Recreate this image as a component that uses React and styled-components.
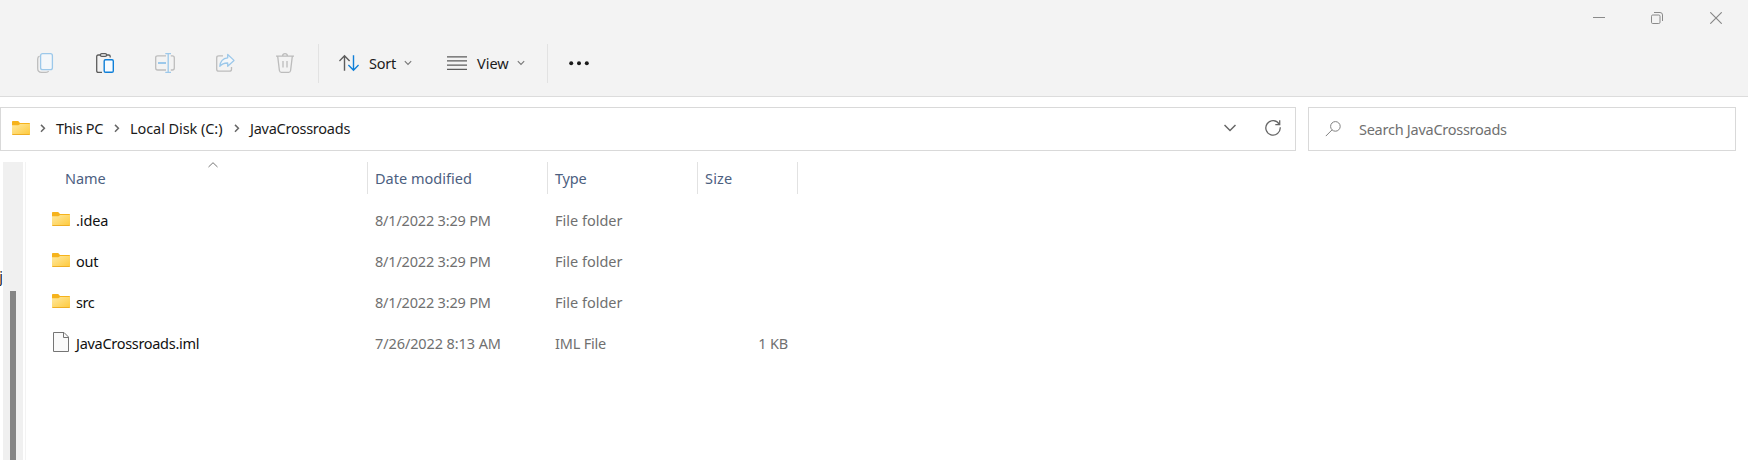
import React from 'react';
import styled, { createGlobalStyle } from 'styled-components';

const GlobalStyle = createGlobalStyle`
  * { box-sizing: border-box; }
  body {
    margin: 0;
    background: #fff;
    font: 14.5px/20px 'Noto Sans', 'Open Sans', sans-serif;
  }
  svg { display: block; flex: none; }
`;

const Window = styled.div`
  display: flex;
  flex-direction: column;
  height: 460px;
  overflow: hidden;
  background: #fff;
`;

const Header = styled.header`
  flex: none;
  height: 97px;
  background: #f3f3f3;
  border-bottom: 1px solid #dcdcdc;
`;

const TitleBar = styled.div`
  display: flex;
  justify-content: flex-end;
  height: 30px;
  padding: 6px 3px 0 0;
`;

const WindowButton = styled.div`
  display: flex;
  align-items: center;
  justify-content: center;
  width: ${(p) => p.$width || 58}px;
  height: 24px;
`;

const Toolbar = styled.div`
  display: flex;
  align-items: center;
  height: 66px;
  padding-left: 15px;
`;

const ToolButton = styled.div`
  display: flex;
  align-items: center;
  justify-content: center;
  width: 60px;
  height: 40px;
`;

const ToolMenu = styled.div`
  display: flex;
  align-items: center;
  width: ${(p) => p.$width}px;
  height: 40px;
  padding-left: ${(p) => p.$inset}px;
  color: #1b1b1b;
`;

const MenuLabel = styled.span`
  flex: none;
  width: ${(p) => p.$width}px;
  margin-left: 10px;
  letter-spacing: ${(p) => p.$track || 0}px;
  white-space: nowrap;
`;

const ToolDivider = styled.div`
  width: 1px;
  height: 39px;
  margin-left: ${(p) => p.$gap || 0}px;
  background: #e2e2e2;
`;

const NavRow = styled.div`
  display: flex;
  flex: none;
  gap: 12px;
  padding: 10px 12px 11px 0;
`;

const Field = styled.div`
  display: flex;
  align-items: center;
  height: 44px;
  border: 1px solid #d9d9d9;
  background: #fff;
`;

const AddressBar = styled(Field)`
  width: 1296px;
  padding: 0 14px 2px 11px;
`;

const SearchBox = styled(Field)`
  flex: 1;
  padding-left: 16px;
  color: #707070;
`;

const SearchHint = styled.span`
  margin-left: 18px;
  letter-spacing: -0.26px;
`;

const Crumb = styled.span`
  flex: none;
  width: ${(p) => p.$width}px;
  margin-left: ${(p) => p.$gap}px;
  letter-spacing: ${(p) => p.$track || 0}px;
  white-space: nowrap;
  color: #1b1b1b;
`;

const Spacer = styled.div`
  flex: 1;
`;

const AddressActions = styled.div`
  display: flex;
  align-items: center;
  gap: 29px;
`;

const CrumbArrowSlot = styled.div`
  margin-left: ${(p) => p.$gap || 0}px;
`;

const Content = styled.main`
  display: flex;
  flex: 1;
  min-height: 0;
`;

const NavPane = styled.div`
  display: flex;
  justify-content: flex-end;
  width: 3px;
  padding-top: 104px;
  overflow: hidden;
  color: #222;
`;

const ScrollTrack = styled.div`
  width: 20px;
  padding: 129px 7px 0;
  background: #f0f0f0;
`;

const ScrollThumb = styled.div`
  height: 100%;
  background: #858585;
`;

const PaneBorder = styled.div`
  width: 1px;
  margin-left: 2px;
  background: #f3f3f3;
`;

const FileList = styled.div`
  width: 773px;
`;

const columns = '342px 180px 150px 100px';

const ListHeader = styled.div`
  display: grid;
  grid-template-columns: ${columns};
  height: 32px;
  margin-bottom: 6px;
  color: #4c607f;
`;

const HeaderCell = styled.div`
  display: flex;
  align-items: center;
  padding: 0 0 1px ${(p) => p.$inset || 7}px;
  border-right: 1px solid #e2e2e2;
  letter-spacing: ${(p) => p.$track || 0}px;
`;

const SortCaret = styled.div`
  align-self: flex-start;
  margin-left: 102px;
`;

const Row = styled.div`
  display: grid;
  grid-template-columns: ${columns};
  align-items: center;
  height: 41px;
  padding-bottom: 2px;
  color: #707070;
`;

const NameCell = styled.div`
  display: flex;
  align-items: center;
  padding-left: 26px;
  color: #111;
`;

const IconSlot = styled.div`
  width: 18px;
  margin: -1px 6px 0 0;
`;

const FileName = styled.span`
  letter-spacing: ${(p) => p.$track || 0}px;
`;

const Cell = styled.div`
  padding-left: 7px;
  letter-spacing: ${(p) => p.$track || 0}px;
  white-space: nowrap;
`;

const SizeCell = styled(Cell)`
  padding-right: 10px;
  text-align: right;
`;

const Icon = ({ w = 20, h = 20, children, ...rest }) => (
  <svg width={w} height={h} viewBox={`0 0 ${w} ${h}`} fill="none" {...rest}>
    {children}
  </svg>
);

const CopyIcon = () => (
  <Icon strokeWidth="1.3">
    <path d="M4.6 3.2Q2.7 3.8 2.7 6V15.5Q2.7 19.3 6.5 19.3H11Q13 19.3 13.6 18" stroke="#bdbdbd" />
    <rect x="5.6" y=".7" width="11.8" height="16" rx="2" fill="#f4f7fa" stroke="#9cc8ea" />
  </Icon>
);

const PasteIcon = () => (
  <Icon strokeWidth="1.3">
    <path d="M7 19.3H3.2Q1.7 19.3 1.7 17.8V3.7Q1.7 2 3.2 2H5.5M11.5 2H13.8Q15.2 2 15.2 3.5V4.5" stroke="#5c5c5c" />
    <rect x="5.4" y=".7" width="6.2" height="2.6" rx="1.3" stroke="#5c5c5c" />
    <rect x="9.2" y="6.7" width="9.1" height="12.6" rx="1.3" fill="#f7fbff" stroke="#0f7fd8" strokeWidth="1.4" />
  </Icon>
);

const RenameIcon = () => (
  <Icon strokeWidth="1.3">
    <path d="M11 2.8H2.7Q.7 2.8 .7 4.8V15Q.7 17 2.7 17H11M15.8 2.8H17.3Q19.3 2.8 19.3 4.8V15Q19.3 17 17.3 17H15.8" stroke="#bdbdbd" />
    <path d="M3 10H11" stroke="#9cc8ea" strokeWidth="2" />
    <path d="M10.3 .7H16M10.3 19.3H16M13.2 .7V19.3" stroke="#9cc8ea" />
  </Icon>
);

const ShareIcon = () => (
  <Icon strokeWidth="1.3">
    <path d="M8 2.8H3.8Q1.7 2.8 1.7 4.9V16.2Q1.7 18.2 3.8 18.2H14.5Q16.5 18.2 16.5 16.2V14" stroke="#bdbdbd" />
    <path d="M12.7 1.5L19 7.4L12.7 13.2V10Q7.8 9.8 4.8 13.3Q5.5 5.5 12.7 4.8Z" fill="#f4f7fa" stroke="#9cc8ea" strokeLinejoin="round" />
  </Icon>
);

const TrashIcon = () => (
  <Icon strokeWidth="1.3" stroke="#bcbcbc">
    <path d="M1 3.2H19M7.5 3Q7.8 .7 10 .7T12.5 3M2.7 3.4L4.4 17.5Q4.7 19.3 6.3 19.3H13.7Q15.3 19.3 15.6 17.5L17.3 3.4M8 8V14.5M12 8V14.5" />
  </Icon>
);

const SortIcon = () => (
  <Icon strokeWidth="1.4">
    <path d="M5.5 17.8V2.8M.4 8L5.5 2.8L10.6 8" stroke="#5c5c5c" />
    <path d="M14.5 2.2V17.2M9.4 12L14.5 17.2L19.6 12" stroke="#0f7fd8" />
  </Icon>
);

const ViewIcon = () => (
  <Icon stroke="#5c5c5c" strokeWidth="1.2">
    <path d="M0 3.8H20M0 7.9H20M0 12.1H20M0 16.3H20" />
  </Icon>
);

const MenuChevron = () => (
  <Icon w={8} h={6} stroke="#777" strokeWidth="1.1">
    <path d="M.8 1.2L4 4.4L7.2 1.2" />
  </Icon>
);

const MoreIcon = () => (
  <Icon w={20} h={6} fill="#1b1b1b">
    <circle cx="2.2" cy="3.3" r="2" />
    <circle cx="10" cy="3.3" r="2" />
    <circle cx="17.8" cy="3.3" r="2" />
  </Icon>
);

const CrumbArrow = () => (
  <Icon w={6} h={10} stroke="#666" strokeWidth="1.5">
    <path d="M1 1.9L4.4 5.3L1 8.7" />
  </Icon>
);

const FolderIcon = () => (
  <Icon w={18} h={14}>
    <defs>
      <linearGradient id="folder" x1="0" y1="0" x2="1" y2="1">
        <stop offset="0" stopColor="#ffe9a0" />
        <stop offset="1" stopColor="#fec93b" />
      </linearGradient>
    </defs>
    <path d="M0 .8Q0 0 .8 0H6.2L8 2H17.3Q18 2 18 2.8V6H0Z" fill="#f6b31c" />
    <path d="M0 4.2H6.3L8.2 3H18V13.2Q18 14 17.2 14H.8Q0 14 0 13.2Z" fill="url(#folder)" />
    <path d="M.4 13.5H17.6" stroke="#eeae25" />
  </Icon>
);

const FileIcon = () => (
  <Icon w={18} h={20}>
    <path d="M1.5 .5H12L16.5 5V19.5H1.5Z" fill="#fafafa" stroke="#757575" />
    <path d="M11.5 .5V5.5H16.5" stroke="#757575" />
  </Icon>
);

const rows = [
  { name: '.idea', track: -0.1, date: '8/1/2022 3:29 PM', type: 'File folder', folder: true },
  { name: 'out', track: -0.3, date: '8/1/2022 3:29 PM', type: 'File folder', folder: true },
  { name: 'src', track: -0.4, date: '8/1/2022 3:29 PM', type: 'File folder', folder: true },
  { name: 'JavaCrossroads.iml', track: -0.3, date: '7/26/2022 8:13 AM', type: 'IML File', size: '1 KB' },
];

export default function App() {
  return (
    <Window>
      <GlobalStyle />
      <Header>
        <TitleBar>
          <WindowButton>
            <Icon w={12} h={12} stroke="#8a8a8a"><path d="M0 5.5H12" /></Icon>
          </WindowButton>
          <WindowButton>
            <Icon w={12} h={12} stroke="#8a8a8a">
              <rect x=".5" y="3" width="8.5" height="8.5" rx="1.2" />
              <path d="M3 .5H9Q11.5 .5 11.5 3V9" />
            </Icon>
          </WindowButton>
          <WindowButton $width={59}>
            <Icon w={12} h={12} stroke="#858585" strokeWidth="1.1"><path d="M.3 .3L11.7 11.7M11.7 .3L.3 11.7" /></Icon>
          </WindowButton>
        </TitleBar>
        <Toolbar>
          <ToolButton><CopyIcon /></ToolButton>
          <ToolButton><PasteIcon /></ToolButton>
          <ToolButton><RenameIcon /></ToolButton>
          <ToolButton><ShareIcon /></ToolButton>
          <ToolButton><TrashIcon /></ToolButton>
          <ToolDivider $gap={3} />
          <ToolMenu $width={108} $inset={20}>
            <SortIcon />
            <MenuLabel $width={35} $track={-0.2}>Sort</MenuLabel>
            <MenuChevron />
          </ToolMenu>
          <ToolMenu $width={120} $inset={20}>
            <ViewIcon />
            <MenuLabel $width={40}>View</MenuLabel>
            <MenuChevron />
          </ToolMenu>
          <ToolDivider />
          <ToolMenu $width={60} $inset={21}><MoreIcon /></ToolMenu>
        </Toolbar>
      </Header>
      <NavRow>
        <AddressBar>
          <FolderIcon />
          <CrumbArrowSlot $gap={10}><CrumbArrow /></CrumbArrowSlot>
          <Crumb $gap={10} $width={48} $track={-0.33}>This PC</Crumb>
          <CrumbArrowSlot $gap={10}><CrumbArrow /></CrumbArrowSlot>
          <Crumb $gap={10} $width={94} $track={-0.07}>Local Disk (C:)</Crumb>
          <CrumbArrowSlot $gap={10}><CrumbArrow /></CrumbArrowSlot>
          <Crumb $gap={10} $width={107} $track={-0.25}>JavaCrossroads</Crumb>
          <Spacer />
          <AddressActions>
            <Icon w={12} h={8} stroke="#666" strokeWidth="1.5"><path d="M.5 1L6 6.5L11.5 1" /></Icon>
            <Icon w={16} h={16} stroke="#666" strokeWidth="1.3">
              <path d="M14.2 4.2A7.2 7.2 0 1 0 15.2 7.3" />
              <path d="M14.7 .2V4.6H10.3" />
            </Icon>
          </AddressActions>
        </AddressBar>
        <SearchBox>
          <Icon w={16} h={16} stroke="#808080" strokeWidth="1">
            <circle cx="10.4" cy="5.4" r="4.8" />
            <path d="M7 8.9L.8 15.1" />
          </Icon>
          <SearchHint>Search JavaCrossroads</SearchHint>
        </SearchBox>
      </NavRow>
      <Content>
        <NavPane>j</NavPane>
        <ScrollTrack><ScrollThumb /></ScrollTrack>
        <PaneBorder />
        <FileList>
          <ListHeader>
            <HeaderCell $inset={39} $track={-0.1}>
              Name
              <SortCaret>
                <Icon w={10} h={6} stroke="#777"><path d="M.5 5L5 .7L9.5 5" /></Icon>
              </SortCaret>
            </HeaderCell>
            <HeaderCell $track={0.02}>Date modified</HeaderCell>
            <HeaderCell $track={-0.2}>Type</HeaderCell>
            <HeaderCell $track={0.2}>Size</HeaderCell>
          </ListHeader>
          {rows.map((r) => (
            <Row key={r.name}>
              <NameCell>
                <IconSlot>{r.folder ? <FolderIcon /> : <FileIcon />}</IconSlot>
                <FileName $track={r.track}>{r.name}</FileName>
              </NameCell>
              <Cell $track={r.folder ? -0.19 : -0.1}>{r.date}</Cell>
              <Cell $track={r.folder ? 0 : -0.2}>{r.type}</Cell>
              <SizeCell $track={-0.2}>{r.size}</SizeCell>
            </Row>
          ))}
        </FileList>
      </Content>
    </Window>
  );
}
